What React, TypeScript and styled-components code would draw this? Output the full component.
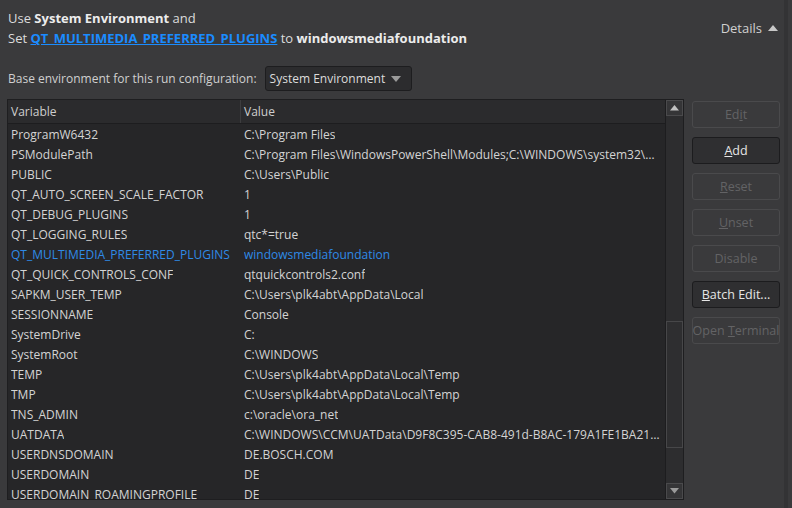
import styled, { createGlobalStyle } from 'styled-components'

const GlobalStyle = createGlobalStyle`
  html, body {
    margin: 0;
    padding: 0;
    background: #3a3a3c;
  }
  body {
    font-family: "Open Sans", "Noto Sans", sans-serif;
    font-size: 12px;
    color: #d4d4d4;
  }
`

const Page = styled.div`
  width: 788px;
  height: 508px;
  box-sizing: border-box;
  border-right: 4px solid #333335;
  padding: 8px 0 8px 7px;
  display: flex;
  flex-direction: column;
  overflow: hidden;
  background: #3a3a3c;
`

const Summary = styled.div`
  display: flex;
  justify-content: space-between;
  align-items: center;
  padding-left: 1px;
  padding-right: 6px;
`

const SummaryText = styled.div`
  font-size: 13px;
  line-height: 20px;
  color: #dcdcdc;
  b {
    font-weight: 700;
    color: #ececec;
  }
`

const EnvLink = styled.a`
  color: #1a8cff;
  font-weight: 700;
  text-decoration: underline;
`

const DetailsToggle = styled.div`
  display: flex;
  align-items: center;
  gap: 6px;
  font-size: 13px;
  color: #d0d0d0;
`

const BaseRow = styled.div`
  display: flex;
  align-items: center;
  gap: 8px;
  margin-top: 18px;
  padding-left: 1px;
  font-size: 12px;
  color: #d0d0d0;
`

const Combo = styled.div`
  width: 147px;
  height: 25px;
  box-sizing: border-box;
  display: flex;
  align-items: center;
  justify-content: space-between;
  padding: 0 10px 0 4px;
  background: #2c2c2e;
  border: 1px solid #1d1d1f;
  border-radius: 3px;
  color: #dcdcdc;
  font-size: 12px;
  white-space: nowrap;
`

const Content = styled.div`
  display: flex;
  gap: 8px;
  margin-top: 8px;
  flex: 1;
  min-height: 0;
`

const TableFrame = styled.div`
  width: 677px;
  box-sizing: border-box;
  border: 1px solid #1e1e20;
  display: flex;
  background: #262628;
`

const TableBody = styled.div`
  flex: 1;
  min-width: 0;
  overflow: hidden;
`

const Row = styled.div<{ $header?: boolean; $accent?: boolean }>`
  display: grid;
  grid-template-columns: 233px 1fr;
  height: ${p => (p.$header ? '23px' : '20px')};
  align-items: center;
  background: ${p => (p.$header ? '#2b2b2d' : 'transparent')};
  border-bottom: ${p => (p.$header ? '1px solid #1d1d1f' : 'none')};
  color: ${p => (p.$accent ? '#2f8ae6' : p.$header ? '#cfcfcf' : '#d4d4d4')};
`

const Cell = styled.div<{ $divider?: boolean }>`
  padding-left: 3px;
  padding-right: 4px;
  white-space: nowrap;
  overflow: hidden;
  height: 100%;
  display: flex;
  align-items: center;
  border-right: ${p => (p.$divider ? '1px solid #3d3d3f' : 'none')};
`

const CellText = styled.span`
  overflow: hidden;
  text-overflow: ellipsis;
  white-space: nowrap;
`

const ScrollBar = styled.div`
  width: 17px;
  border-left: 1px solid #1d1d1f;
  background: #2d2d2f;
  display: flex;
  flex-direction: column;
`

const ScrollArrow = styled.div`
  height: 16px;
  box-sizing: border-box;
  border: 1px solid #4a4a4c;
  background: #353537;
  display: flex;
  align-items: center;
  justify-content: center;
`

const ScrollTrack = styled.div`
  flex: 1;
  display: flex;
  flex-direction: column;
  padding-top: 205px;
  padding-bottom: 35px;
`

const ScrollHandle = styled.div`
  flex: 1;
  box-sizing: border-box;
  border: 1px solid #474749;
  background: #2e2e30;
`

const ButtonColumn = styled.div`
  display: flex;
  flex-direction: column;
  gap: 9px;
  width: 88px;
  padding-top: 2px;
`

const ActionButton = styled.div<{ $enabled?: boolean }>`
  height: 27px;
  box-sizing: border-box;
  display: flex;
  align-items: center;
  justify-content: center;
  border-radius: 3px;
  font-size: 12.5px;
  white-space: nowrap;
  background: ${p => (p.$enabled ? '#2f2f31' : '#3a3a3c')};
  border: 1px solid ${p => (p.$enabled ? '#1c1c1e' : '#4a4a4c')};
  color: ${p => (p.$enabled ? '#e6e6e6' : '#636365')};
  u {
    text-decoration: underline;
  }
`

const Triangle = ({ up, color = '#c8c8c8', w = 10 }: { up?: boolean; color?: string; w?: number }) => (
  <svg width={w} height={w / 2 + 1} viewBox="0 0 10 6">
    {up ? <path d="M0 6 L5 0 L10 6 Z" fill={color} /> : <path d="M0 0 L10 0 L5 6 Z" fill={color} />}
  </svg>
)

const envVars: [string, string][] = [
  ['ProgramW6432', 'C:\\Program Files'],
  ['PSModulePath', 'C:\\Program Files\\WindowsPowerShell\\Modules;C:\\WINDOWS\\system32\\WindowsPowerShell\\v1.0\\Modules'],
  ['PUBLIC', 'C:\\Users\\Public'],
  ['QT_AUTO_SCREEN_SCALE_FACTOR', '1'],
  ['QT_DEBUG_PLUGINS', '1'],
  ['QT_LOGGING_RULES', 'qtc*=true'],
  ['QT_MULTIMEDIA_PREFERRED_PLUGINS', 'windowsmediafoundation'],
  ['QT_QUICK_CONTROLS_CONF', 'qtquickcontrols2.conf'],
  ['SAPKM_USER_TEMP', 'C:\\Users\\plk4abt\\AppData\\Local'],
  ['SESSIONNAME', 'Console'],
  ['SystemDrive', 'C:'],
  ['SystemRoot', 'C:\\WINDOWS'],
  ['TEMP', 'C:\\Users\\plk4abt\\AppData\\Local\\Temp'],
  ['TMP', 'C:\\Users\\plk4abt\\AppData\\Local\\Temp'],
  ['TNS_ADMIN', 'c:\\oracle\\ora_net'],
  ['UATDATA', 'C:\\WINDOWS\\CCM\\UATData\\D9F8C395-CAB8-491d-B8AC-179A1FE1BA21\\Config\\Data'],
  ['USERDNSDOMAIN', 'DE.BOSCH.COM'],
  ['USERDOMAIN', 'DE'],
  ['USERDOMAIN_ROAMINGPROFILE', 'DE'],
]

function App() {
  return (
    <>
      <GlobalStyle />
      <Page>
        <Summary>
          <SummaryText>
            <div>Use <b>System Environment</b> and</div>
            <div>
              Set <EnvLink>QT_MULTIMEDIA_PREFERRED_PLUGINS</EnvLink> to <b>windowsmediafoundation</b>
            </div>
          </SummaryText>
          <DetailsToggle>
            Details <Triangle up />
          </DetailsToggle>
        </Summary>

        <BaseRow>
          Base environment for this run configuration:
          <Combo>
            <span>System Environment</span>
            <Triangle color="#9a9a9a" />
          </Combo>
        </BaseRow>

        <Content>
          <TableFrame>
            <TableBody>
              <Row $header>
                <Cell $divider>Variable</Cell>
                <Cell>Value</Cell>
              </Row>
              {envVars.map(([name, value]) => (
                <Row key={name} $accent={name === 'QT_MULTIMEDIA_PREFERRED_PLUGINS'}>
                  <Cell><CellText>{name}</CellText></Cell>
                  <Cell><CellText>{value}</CellText></Cell>
                </Row>
              ))}
            </TableBody>
            <ScrollBar>
              <ScrollArrow><Triangle up color="#c0c0c0" w={9} /></ScrollArrow>
              <ScrollTrack>
                <ScrollHandle />
              </ScrollTrack>
              <ScrollArrow><Triangle color="#9a9a9a" w={9} /></ScrollArrow>
            </ScrollBar>
          </TableFrame>

          <ButtonColumn>
            <ActionButton><span>Ed<u>i</u>t</span></ActionButton>
            <ActionButton $enabled><span><u>A</u>dd</span></ActionButton>
            <ActionButton><span><u>R</u>eset</span></ActionButton>
            <ActionButton><span><u>U</u>nset</span></ActionButton>
            <ActionButton><span>Disable</span></ActionButton>
            <ActionButton $enabled><span><u>B</u>atch Edit...</span></ActionButton>
            <ActionButton><span>Open <u>T</u>erminal</span></ActionButton>
          </ButtonColumn>
        </Content>
      </Page>
    </>
  )
}

export default App
